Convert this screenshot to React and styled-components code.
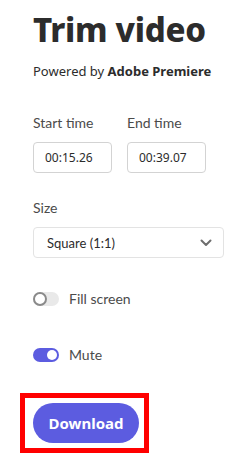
import React, { useState } from "react";
import styled, { createGlobalStyle } from "styled-components";

const GlobalStyle = createGlobalStyle`
  body {
    margin: 0;
    background: #fff;
    font-family: "Noto Sans", "Open Sans", sans-serif;
    color: #2c2c2c;
  }
`;

const Panel = styled.div`
  width: 252px;
  padding: 10px 0 0 33px;
  box-sizing: border-box;
  display: flex;
  flex-direction: column;
`;

const Title = styled.h1`
  margin: 0;
  font-size: 33px;
  line-height: 40px;
  font-weight: 800;
  color: #2c2c2c;
  letter-spacing: -0.3px;
`;

const Powered = styled.p`
  margin: 12px 0 0;
  font-size: 13px;
  line-height: 18px;
  color: #2c2c2c;
  b {
    font-weight: 700;
  }
`;

const Row = styled.div`
  display: flex;
  gap: 15px;
  margin-top: ${({ top }) => top}px;
`;

const Field = styled.div`
  display: flex;
  flex-direction: column;
  gap: 11px;
  margin-top: ${({ top }) => top || 0}px;
`;

const Label = styled.label`
  font-family: Lato, "Noto Sans", sans-serif;
  font-size: 14px;
  line-height: 17px;
  color: #4b4b4b;
`;

const TimeInput = styled.div`
  width: 79px;
  height: 31px;
  box-sizing: border-box;
  border: 1px solid #d3d3d3;
  border-radius: 4px;
  display: flex;
  align-items: center;
  padding-left: 11px;
  font-size: 12px;
  color: #2c2c2c;
`;

const Select = styled.div`
  width: 191px;
  height: 31px;
  box-sizing: border-box;
  border: 1px solid #e3e3e3;
  border-radius: 4px;
  display: flex;
  align-items: center;
  justify-content: space-between;
  padding: 0 11px 0 13px;
  font-family: Lato, "Noto Sans", sans-serif;
  font-size: 13px;
  color: #2c2c2c;
`;

const ToggleRow = styled.div`
  display: flex;
  align-items: center;
  gap: 10px;
  margin-top: ${({ top }) => top}px;
  font-family: Lato, "Noto Sans", sans-serif;
  font-size: 14px;
  line-height: 17px;
  color: #4b4b4b;
`;

const Track = styled.span`
  width: 26px;
  height: 14px;
  border-radius: 7px;
  box-sizing: border-box;
  background: ${({ on }) => (on ? "#5c5ce0" : "#e9e9e9")};
  display: flex;
  align-items: center;
  justify-content: ${({ on }) => (on ? "flex-end" : "flex-start")};
  padding: 0 ${({ on }) => (on ? 2 : 0)}px;
`;

const Knob = styled.span`
  width: ${({ on }) => (on ? 10 : 14)}px;
  height: ${({ on }) => (on ? 10 : 14)}px;
  box-sizing: border-box;
  border-radius: 50%;
  background: #fff;
  border: ${({ on }) => (on ? "none" : "2px solid #8a8a8a")};
`;

const Highlight = styled.div`
  align-self: flex-start;
  margin: 30px 0 0 -13px;
  border: 5px solid #ff0000;
  padding: 5px 5px 5px 8px;
`;

const Button = styled.button`
  width: 106px;
  height: 40px;
  border: none;
  border-radius: 20px;
  background: #5c5ce0;
  color: #fff;
  font-family: inherit;
  font-size: 15px;
  font-weight: 700;
  display: block;
  padding: 0;
`;

function Toggle({ on, label, top }) {
  return (
    <ToggleRow top={top}>
      <Track on={on}>
        <Knob on={on} />
      </Track>
      {label}
    </ToggleRow>
  );
}

export default function App() {
  const [fill] = useState(false);
  const [mute] = useState(true);
  return (
    <>
      <GlobalStyle />
      <Panel>
        <Title>Trim video</Title>
        <Powered>
          Powered by <b>Adobe Premiere</b>
        </Powered>
        <Row top={34}>
          <Field>
            <Label>Start time</Label>
            <TimeInput>00:15.26</TimeInput>
          </Field>
          <Field>
            <Label>End time</Label>
            <TimeInput>00:39.07</TimeInput>
          </Field>
        </Row>
        <Field top={26}>
          <Label>Size</Label>
          <Select>
            Square (1:1)
            <svg width="12" height="8" viewBox="0 0 12 8">
              <path d="M1.5 1.5 L6 6 L10.5 1.5" fill="none" stroke="#6e6e6e" strokeWidth="2" strokeLinecap="round" strokeLinejoin="round" />
            </svg>
          </Select>
        </Field>
        <Toggle on={fill} label="Fill screen" top={32} />
        <Toggle on={mute} label="Mute" top={39} />
        <Highlight>
          <Button>Download</Button>
        </Highlight>
      </Panel>
    </>
  );
}
